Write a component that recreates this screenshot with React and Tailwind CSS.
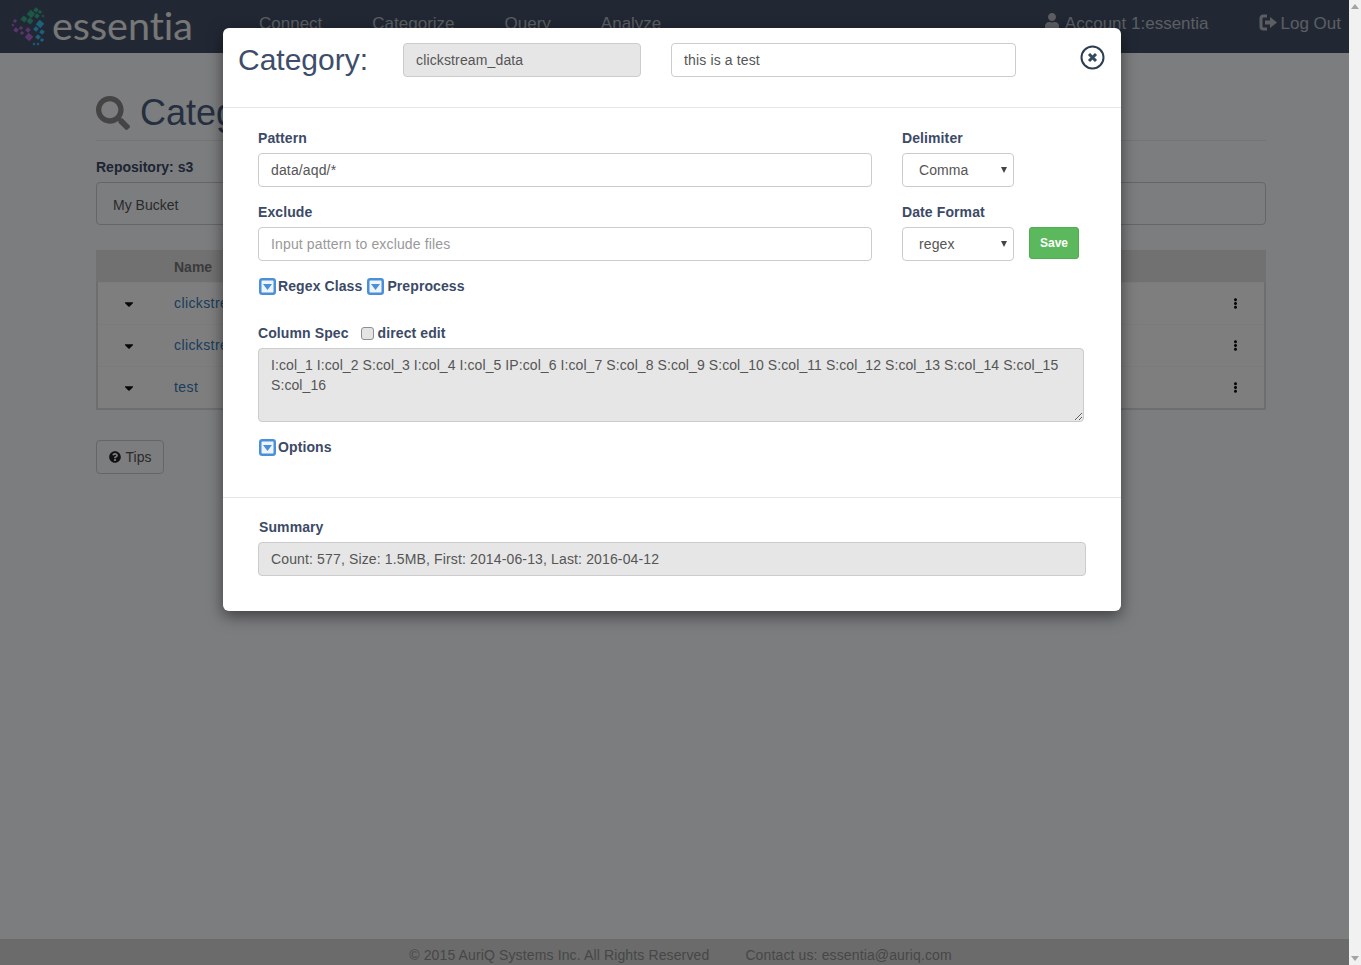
import React from "react";
import { FaSearch, FaQuestionCircle, FaUser, FaCaretDown, FaEllipsisV } from "react-icons/fa";

const squares = [
  ["#37b090", 31, 13, 6], ["#37b090", 36, 9, 4], ["#37b090", 40, 11, 3], ["#37b090", 43, 15, 2], ["#37b090", 37, 15, 4],
  ["#37b090", 30, 20, 5], ["#37b090", 24, 18, 5],
  ["#b868d8", 29, 36, 6], ["#b868d8", 28, 29, 4], ["#b868d8", 21, 27, 3], ["#b868d8", 16, 29, 4], ["#b868d8", 22, 32, 3],
  ["#b868d8", 15, 20, 3], ["#b868d8", 13, 24, 2],
  ["#3ac0f8", 40, 23, 6], ["#3ac0f8", 36, 28, 4], ["#3ac0f8", 42, 31, 4], ["#3ac0f8", 38, 36, 4], ["#3ac0f8", 42, 39, 3],
  ["#3ac0f8", 38, 43, 2], ["#3ac0f8", 34, 43, 2],
];

function Logo() {
  return (
    <svg width="36" height="40" viewBox="11 6 36 40" className="shrink-0">
      {squares.map(([c, x, y, s], i) => (
        <rect key={i} x={x - s / 2} y={y - s / 2} width={s} height={s} fill={c} transform={`rotate(40 ${x} ${y})`} />
      ))}
    </svg>
  );
}

function LogOutIcon() {
  return (
    <svg width="19" height="17" viewBox="0 0 19 17" className="shrink-0 mb-[2px]">
      <path d="M8 2H4.500A2.500 2.500 0 0 0 2 4.500v8A2.500 2.500 0 0 0 4.500 15H8" fill="none" stroke="currentColor" strokeWidth="3" />
      <path d="M6 6.500h5V3l7 5.500-7 5.500v-3.500H6z" fill="currentColor" />
    </svg>
  );
}

function CaretBox() {
  return (
    <svg width="17" height="17" viewBox="0 0 17 17" className="shrink-0">
      <rect x="1.250" y="1.250" width="14.500" height="14.500" rx="2" fill="#eef4fa" stroke="#4a90d9" strokeWidth="2.500" />
      <path d="M4 6h9l-4.500 6z" fill="#4a90d9" />
    </svg>
  );
}

function CloseIcon() {
  return (
    <svg width="25" height="25" viewBox="0 0 25 25">
      <circle cx="12.500" cy="12.500" r="11" fill="#fff" stroke="#2c3e50" strokeWidth="2" />
      <path d="M9 9l7 7M16 9l-7 7" stroke="#34495e" strokeWidth="3" />
    </svg>
  );
}

const field = "block h-[34px] rounded border border-[#ccc] px-3 text-[14px] tracking-[0.14px] text-[#555] outline-none placeholder:text-[#999]";
const label = "block text-[14px] leading-[20px] font-bold text-[#3b4a66] tracking-[0.1px]";

function Select({ value }) {
  return (
    <div className="relative w-[112px] h-[34px]">
      <select
        defaultValue={value}
        className="appearance-none block w-full h-full rounded border border-[#ccc] bg-white pl-4 text-[14px] tracking-[0.1px] text-[#555] outline-none"
      >
        <option>{value}</option>
      </select>
      <svg width="6" height="6" viewBox="0 0 6 6" className="absolute right-[7px] top-[14px]">
        <path d="M0 0h6L3 6z" fill="#444" />
      </svg>
    </div>
  );
}

function Row({ name }) {
  return (
    <div className="flex items-center h-[42px] border-t border-[#f6f6f6] pr-[23px]">
      <div className="w-[62px] flex justify-center text-[#111]">
        <FaCaretDown size={14} />
      </div>
      <a className="ml-[14px] flex-1 text-[14px] text-[#337ab7] tracking-[0.4px]">{name}</a>
      <FaEllipsisV size={11} className="text-[#111]" />
    </div>
  );
}

export default function App() {
  return (
    <div className="flex h-[965px] overflow-hidden font-['Liberation_Sans',Arial,sans-serif]">
      <div className="relative flex-1 flex flex-col bg-[#f8fafe] min-w-0">
        <header className="h-[53px] shrink-0 bg-[#435169] flex items-center text-[#b8bcc4] text-[17px]">
          <div className="w-[259px] h-[53px] flex items-center pl-[11px] shrink-0">
            <Logo />
            <span className="ml-[5px] pb-[5px] font-['Lato',sans-serif] font-normal text-[39.5px] leading-[47px] text-[#eeeeee] [font-variant-ligatures:none]">essentia</span>
          </div>
          <nav className="flex gap-[50px] -mt-[6px]">
            <span>Connect</span>
            <span>Categorize</span>
            <span>Query</span>
            <span>Analyze</span>
          </nav>
          <div className="ml-auto flex items-center gap-[50px] pr-[8px] -mt-[6px]">
            <span className="flex items-center gap-[5px]"><FaUser size={16} className="mb-[5px]" />Account 1:essentia</span>
            <span className="flex items-center gap-[3px]"><LogOutIcon />Log Out</span>
          </div>
        </header>

        <main className="flex-1 w-[1170px] ml-[96px]">
          <div className="mt-[40px] pb-[7px] border-b border-[#e8e8e8] flex items-center gap-[10px] text-[36px] leading-[40px] text-[#4a5f80]">
            <FaSearch size={34} className="text-[#888]" />
            <h1>Categories</h1>
          </div>
          <div className="mt-[16px] text-[14px] leading-[20px] font-bold text-[#3b4a66]">Repository: s3</div>
          <div className="mt-[5px] h-[43px] rounded border border-[#ccc] flex items-center pl-4 pt-[4px] text-[14px] text-[#555]">My Bucket</div>
          <div className="mt-[25px] border-[2px] border-[#dddddd] border-t-0 bg-[#fdfdfd]">
            <div className="-mx-[2px] h-[32px] bg-[#e2e2e2] flex items-center pl-[78px] pt-[2px] text-[14px] font-bold text-[#777]">Name</div>
            <Row name="clickstream_data" />
            <Row name="clickstream_old" />
            <Row name="test" />
          </div>
          <button className="mt-[30px] h-[34px] w-[68px] rounded border border-[#ccc] flex items-center justify-center gap-[5px] text-[14px] text-[#555]">
            <FaQuestionCircle size={12} className="text-[#222]" />Tips
          </button>
        </main>

        <footer className="h-[26px] shrink-0 bg-[#d6d6d6] flex items-center justify-center gap-[36px] text-[14px] tracking-[0.13px] text-[#8e8e8e] pt-[6px] pl-[12px]">
          <span>© 2015 AuriQ Systems Inc. All Rights Reserved</span>
          <span>Contact us: essentia@auriq.com</span>
        </footer>

        <div className="absolute inset-0 bg-black/50" />

        <div className="absolute left-[223px] top-[28px] w-[898px] h-[583px] bg-white rounded-md shadow-[0_5px_15px_rgba(0,0,0,0.5)]">
          <div className="h-[80px] border-b border-[#e5e5e5] pl-[15px] pt-[15px] flex items-start">
            <h2 className="w-[165px] text-[30px] leading-[33px] text-[#3e4d6a]">Category:</h2>
            <input readOnly value="clickstream_data" className={`${field} w-[238px] bg-[#e6e6e6]`} />
            <input readOnly value="this is a test" className={`${field} w-[345px] ml-[30px] bg-white`} />
            <div className="ml-[64px] mt-[2px]"><CloseIcon /></div>
          </div>

          <div className="h-[390px] border-b border-[#e5e5e5] pl-[35px] pt-[20px]">
            <div className="flex">
              <div className="w-[614px]">
                <label className={label}>Pattern</label>
                <input readOnly value="data/aqd/*" className={`${field} w-full mt-[5px] bg-white`} />
              </div>
              <div className="ml-[30px]">
                <label className={label}>Delimiter</label>
                <div className="mt-[5px]"><Select value="Comma" /></div>
              </div>
            </div>
            <div className="flex mt-[15px]">
              <div className="w-[614px]">
                <label className={label}>Exclude</label>
                <input readOnly placeholder="Input pattern to exclude files" className={`${field} w-full mt-[5px] bg-white`} />
              </div>
              <div className="ml-[30px]">
                <label className={label}>Date Format</label>
                <div className="mt-[5px] flex items-start gap-[15px]">
                  <Select value="regex" />
                  <button className="h-[32px] w-[50px] rounded-[3px] border border-[#4cae4c] bg-[#5cb85c] text-white text-[12px] font-bold">Save</button>
                </div>
              </div>
            </div>
            <div className={`${label} flex items-center mt-[15px] h-[20px]`}>
              <span className="ml-[1px]"><CaretBox /></span><span className="ml-[2px]">Regex Class</span>
              <span className="ml-[5px]"><CaretBox /></span><span className="ml-[3px]">Preprocess</span>
            </div>
            <div className={`${label} flex items-center mt-[27px] h-[20px]`}>
              <span>Column Spec</span>
              <input type="checkbox" className="appearance-none ml-[12px] w-[13px] h-[13px] rounded-[3px] border border-[#8f8f8f] bg-[#e4e4e4]" />
              <span className="ml-[4px]">direct edit</span>
            </div>
            <textarea
              readOnly
              value="I:col_1 I:col_2 S:col_3 I:col_4 I:col_5 IP:col_6 I:col_7 S:col_8 S:col_9 S:col_10 S:col_11 S:col_12 S:col_13 S:col_14 S:col_15 S:col_16"
              className="block mt-[5px] w-[826px] h-[74px] rounded border border-[#ccc] bg-[#e6e6e6] px-3 py-[6px] text-[14px] tracking-[0.08px] leading-[20px] text-[#555] outline-none"
            />
            <div className={`${label} flex items-center mt-[15px] h-[20px]`}>
              <span className="ml-[1px]"><CaretBox /></span><span className="ml-[2px]">Options</span>
            </div>
          </div>

          <div className="pl-[35px] pt-[19px]">
            <div className={`${label} ml-[1px]`}>Summary</div>
            <input readOnly value="Count: 577, Size: 1.5MB, First: 2014-06-13, Last: 2016-04-12" className={`${field} w-[828px] mt-[5px] bg-[#e6e6e6]`} />
          </div>
        </div>
      </div>

      <div className="w-[12px] shrink-0 bg-[#f1f1f1] flex flex-col items-center justify-between py-[4px]">
        <svg width="8" height="5" viewBox="0 0 8 5"><path d="M4 0l4 5H0z" fill="#a3a3a3" /></svg>
        <svg width="8" height="5" viewBox="0 0 8 5"><path d="M0 0h8L4 5z" fill="#a3a3a3" /></svg>
      </div>
    </div>
  );
}
